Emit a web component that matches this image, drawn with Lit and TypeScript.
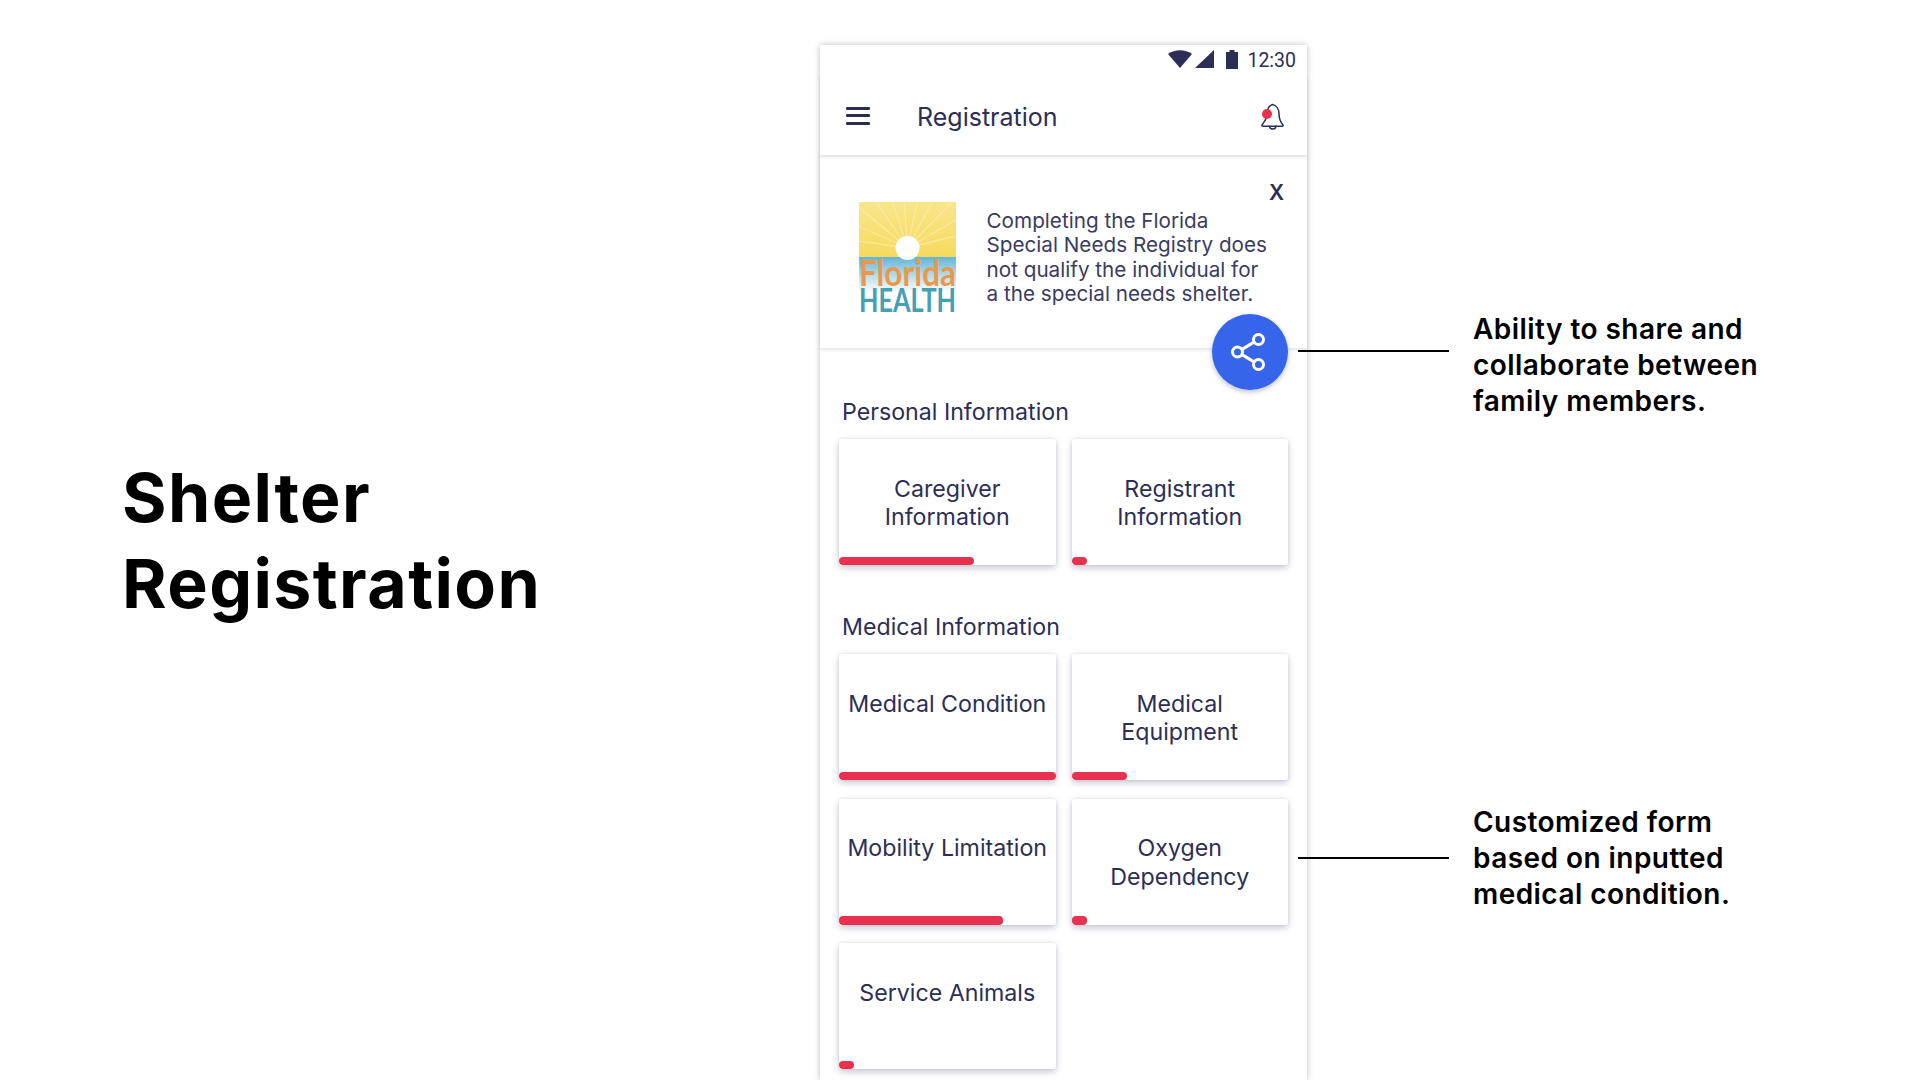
import { LitElement, css, html, svg } from 'lit';
import { customElement } from 'lit/decorators.js';
import { styleMap } from 'lit/directives/style-map.js';

interface Tile {
  label: string[];
  progress: number;
}

const PERSONAL: Tile[] = [
  { label: ['Caregiver', 'Information'], progress: 135 },
  { label: ['Registrant', 'Information'], progress: 15 },
];

const MEDICAL: Tile[] = [
  { label: ['Medical Condition'], progress: 216.5 },
  { label: ['Medical', 'Equipment'], progress: 55 },
  { label: ['Mobility Limitation'], progress: 164 },
  { label: ['Oxygen', 'Dependency'], progress: 15 },
  { label: ['Service Animals'], progress: 15 },
];

// sun rays of the logo, as angles in degrees from the sun centre
const RAYS = [-82, -66, -50, -34, -18, -4, 12, 28, 44, 60, 76];

function logo() {
  return html`<svg class="logo" viewBox="0 0 97 110" width="97" height="110">
    <defs>
      <linearGradient id="sky" x1="0" y1="0" x2="0" y2="1">
        <stop offset="0" stop-color="#f9e68c"></stop>
        <stop offset="1" stop-color="#f6da5e"></stop>
      </linearGradient>
      <linearGradient id="sea" x1="0" y1="0" x2="0" y2="1">
        <stop offset="0" stop-color="#62b5d8"></stop>
        <stop offset="0.6" stop-color="#bfe0ec"></stop>
        <stop offset="1" stop-color="#f7fbfc"></stop>
      </linearGradient>
      <clipPath id="sky-clip"><rect width="97" height="55"></rect></clipPath>
    </defs>
    <rect width="97" height="55" fill="url(#sky)"></rect>
    <g clip-path="url(#sky-clip)">
      ${RAYS.map((a) => {
        const r = (a * Math.PI) / 180;
        return svg`<line x1="48.5" y1="46" x2=${48.5 + Math.sin(r) * 90} y2=${46 - Math.cos(r) * 90}
          stroke="#fbeda8" stroke-width="1.3" opacity="0.8"></line>`;
      })}
    </g>
    <rect y="55" width="97" height="34" fill="url(#sea)"></rect>
    <circle cx="48.5" cy="46" r="12" fill="#fff"></circle>
    <text x="0" y="84" class="florida" textLength="97" lengthAdjust="spacingAndGlyphs">Florida</text>
    <text x="0" y="110" class="health" textLength="97" lengthAdjust="spacingAndGlyphs">HEALTH</text>
  </svg>`;
}

@customElement('app-root')
export class AppRoot extends LitElement {
  static styles = css`
    :host {
      display: block;
      width: 1920px;
      height: 1080px;
      overflow: hidden;
      background: #fff;
      font-family: Inter, 'Liberation Sans', sans-serif;
    }

    .page {
      display: flex;
      align-items: flex-start;
      height: 1080px;
    }

    .intro {
      width: 820px;
      flex: none;
      box-sizing: border-box;
      padding: 454px 0 0 122px;
      font-size: 68px;
      line-height: 86px;
      font-weight: 700;
      letter-spacing: 1.4px;
      color: #000;
    }

    .phone {
      position: relative;
      width: 487px;
      height: 1035px;
      flex: none;
      margin-top: 45px;
      background: #fff;
      color: #2c2e55;
      box-shadow: 0 0 6px rgba(40, 40, 60, 0.3);
    }

    .status {
      height: 30px;
      box-sizing: border-box;
      padding: 0 11px 2px 0;
      display: flex;
      align-items: center;
      justify-content: flex-end;
      font-family: Roboto, sans-serif;
      font-size: 19.5px;
    }

    .status svg {
      display: block;
    }

    .status .time {
      margin-left: 9px;
      margin-top: 3px;
    }

    .appbar {
      height: 80px;
      box-sizing: border-box;
      display: flex;
      align-items: center;
      padding: 2px 22px 0 26px;
      box-shadow: 0 2px 3px rgba(40, 40, 60, 0.14);
    }

    .menu {
      width: 24px;
      height: 18px;
      flex: none;
      display: flex;
      flex-direction: column;
      justify-content: space-between;
      margin-top: -1px;
    }

    .menu span {
      height: 3px;
      border-radius: 1px;
      background: #2c2e55;
    }

    .title {
      flex: 1;
      margin: 2px 0 0 47px;
      font-size: 25px;
    }

    .banner {
      height: 193px;
      box-sizing: border-box;
      position: relative;
      display: flex;
      padding: 47px 0 0 39px;
      box-shadow: 0 2px 3px rgba(40, 40, 60, 0.12);
    }

    .logo {
      flex: none;
      display: block;
      overflow: visible;
    }

    .florida {
      font-family: Lato, sans-serif;
      font-size: 37px;
      font-weight: 700;
      fill: #e79a4e;
    }

    .health {
      font-family: Lato, sans-serif;
      font-size: 33px;
      font-weight: 700;
      fill: #45a0b3;
    }

    .notice {
      margin: 6.5px 0 0 30.5px;
      font-size: 20.7px;
      line-height: 24.5px;
      color: #3a3c5e;
      white-space: nowrap;
    }

    .close {
      position: absolute;
      top: 26px;
      right: 23px;
      font-size: 21px;
      font-weight: 600;
      line-height: 24px;
    }

    .fab {
      position: absolute;
      left: 392px;
      top: 269px;
      width: 76px;
      height: 76px;
      border-radius: 50%;
      background: #3664ea;
      box-shadow: 0 2px 5px rgba(30, 40, 90, 0.3);
      display: flex;
      align-items: center;
      justify-content: center;
    }

    .fab svg {
      margin-right: 4px;
    }

    .sections {
      padding: 50px 20px 0 19px;
    }

    h2 {
      margin: 0 0 13px 3px;
      font-size: 23.2px;
      line-height: 28px;
      font-weight: 400;
      color: #2c2e55;
    }

    .grid {
      display: grid;
      grid-template-columns: 216.5px 216.5px;
      column-gap: 16px;
      row-gap: 18.5px;
      margin-bottom: 48px;
    }

    .tile {
      position: relative;
      height: 126px;
      box-sizing: border-box;
      padding-top: 35.5px;
      border-radius: 3px;
      background: #fff;
      overflow: hidden;
      text-align: center;
      font-size: 23.2px;
      line-height: 28.5px;
      white-space: nowrap;
    }

    .shadow {
      border-radius: 3px;
      box-shadow: 0 3px 7px rgba(50, 55, 95, 0.26), 0 0 3px rgba(50, 55, 95, 0.12);
    }

    .bar {
      position: absolute;
      left: 0;
      bottom: 0;
      height: 8.5px;
      border-radius: 4px;
      background: #e8304f;
    }

    .notes {
      position: relative;
      z-index: 1;
      flex: 1;
      padding-top: 311px;
      margin-left: -9px;
      min-width: 0;
    }

    .note {
      display: flex;
      align-items: flex-start;
      font-size: 28px;
      line-height: 36px;
      font-weight: 600;
      letter-spacing: 0.45px;
      color: #000;
    }

    .note + .note {
      margin-top: 385px;
    }

    .rule {
      width: 151px;
      height: 2px;
      flex: none;
      margin: 39px 24px 0 0;
      background: #000;
    }

    .note + .note .rule {
      margin-top: 53px;
    }
  `;

  private renderTile(tile: Tile) {
    return html`<div class="shadow">
      <div class="tile">
        ${tile.label.map((line) => html`<div>${line}</div>`)}
        <div class="bar" style=${styleMap({ width: `${tile.progress}px` })}></div>
      </div>
    </div>`;
  }

  render() {
    return html`<div class="page">
      <div class="intro">Shelter<br />Registration</div>

      <div class="phone">
        <div class="status">
          <svg width="24" height="18" viewBox="0 0 24 18"><path fill="#2c2e55" d="M0 4 C7 -1 17 -1 24 4 L12 18 Z" /></svg>
          <svg style="margin-left:3px" width="19" height="18" viewBox="0 0 19 18"><path fill="#2c2e55" d="M0 18 L19 0 V18 Z" /></svg>
          <svg style="margin-left:12px" width="12" height="19" viewBox="0 0 12 19"><path fill="#2c2e55" d="M0 2 H3.5 V0 H8.5 V2 H12 V19 H0 Z" /></svg>
          <span class="time">12:30</span>
        </div>

        <div class="appbar">
          <div class="menu"><span></span><span></span><span></span></div>
          <div class="title">Registration</div>
          <svg width="26" height="28" viewBox="0 0 26 28" fill="none" stroke="#2c2e55" stroke-width="1.5" stroke-linejoin="round" stroke-linecap="round">
            <path d="M13.700 2.500 C9.500 3.500 8 8 8 12 C8 17 5 20 3 23 C2.700 24 3 24.200 4 24.200 H23 C24 24.200 24.300 23.700 24 23 C21.500 20 20 17 20 12 C20 8 18 3.500 13.700 2.500 Z" />
            <path d="M10.500 24.200 C11 28 16.500 28 17 24.200" />
            <circle cx="8" cy="12" r="5" fill="#e8304f" stroke="none" />
          </svg>
        </div>

        <div class="banner">
          ${logo()}
          <div class="notice">
            Completing the Florida<br />
            Special Needs Registry does<br />
            not qualify the individual for<br />
            a the special needs shelter.
          </div>
          <div class="close">X</div>
        </div>

        <div class="fab">
          <svg width="34" height="38" viewBox="0 0 34 38" fill="none" stroke="#fff" stroke-width="3">
            <circle cx="6.500" cy="19" r="5" />
            <circle cx="27.500" cy="6.500" r="5" />
            <circle cx="27.500" cy="31.500" r="5" />
            <path d="M11 16.400 L23 9.100 M11 21.600 L23 28.900" />
          </svg>
        </div>

        <div class="sections">
          <h2>Personal Information</h2>
          <div class="grid">${PERSONAL.map((t) => this.renderTile(t))}</div>
          <h2>Medical Information</h2>
          <div class="grid">${MEDICAL.map((t) => this.renderTile(t))}</div>
        </div>
      </div>

      <div class="notes">
        <div class="note">
          <div class="rule"></div>
          <div>Ability to share and<br />collaborate between<br />family members.</div>
        </div>
        <div class="note">
          <div class="rule"></div>
          <div>Customized form<br />based on inputted<br />medical condition.</div>
        </div>
      </div>
    </div>`;
  }
}
